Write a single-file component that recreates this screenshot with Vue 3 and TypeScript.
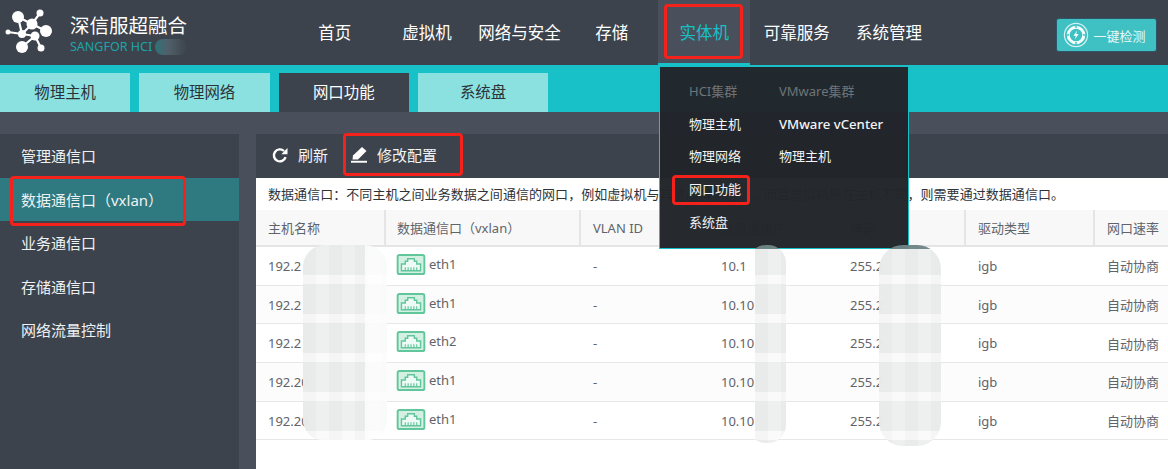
<template>
  <div class="page">
    <header class="topbar">
      <div class="brand">
        <svg class="logo" viewBox="0 0 54 54" width="54" height="54">
          <g stroke="#fff" stroke-width="2.2" fill="none">
            <path d="M18 12 22 29M8 27 22 29 35 31M32 19 40 8M32 19 46 26M18 12 32 19M22 29 32 19M35 31 22 42M35 31 41 43" />
          </g>
          <g fill="#fff">
            <circle cx="18" cy="12" r="6" />
            <circle cx="40" cy="8" r="3.5" />
            <circle cx="32" cy="19" r="5.5" />
            <circle cx="46" cy="26" r="6" />
            <circle cx="8" cy="27" r="2.5" />
            <circle cx="22" cy="29" r="4" />
            <circle cx="35" cy="31" r="4.5" />
            <circle cx="22" cy="42" r="6" />
            <circle cx="41" cy="43" r="3.5" />
          </g>
        </svg>
        <div class="brand-text">
          <div class="brand-name">深信服超融合</div>
          <div class="brand-sub">SANGFOR HCI<span class="brand-smudge"></span></div>
        </div>
      </div>
      <nav class="nav">
        <a v-for="item in navItems" :key="item" class="nav-item" :class="{ active: item === '实体机' }">{{ item }}</a>
      </nav>
      <button class="check-btn">
        <svg viewBox="0 0 26 26" width="26" height="26">
          <circle cx="13" cy="13" r="11.6" fill="none" stroke="#d5f2f2" stroke-width="1.2" />
          <circle cx="13" cy="13" r="7.8" fill="none" stroke="#f4fcfc" stroke-width="3" />
          <path d="M13 3.5V6M13 20V22.5M3.5 13H6M20 13H22.5" stroke="#3fc0c3" stroke-width="1.4" />
          <path d="M14.2 8.6 10.4 13.8h2.4l-1 3.6 3.8-5.4h-2.4z" fill="#fff" />
        </svg>
        <span>一键检测</span>
      </button>
    </header>

    <div class="tabbar">
      <div v-for="tab in tabs" :key="tab" class="tab" :class="{ active: tab === '网口功能' }">{{ tab }}</div>
    </div>

    <div class="body">
      <aside class="side">
        <div v-for="item in sideItems" :key="item" class="side-item" :class="{ active: item.startsWith('数据') }">{{ item }}</div>
      </aside>
      <main class="main">
        <div class="toolbar">
          <span class="tool">
            <svg viewBox="0 0 18 18" width="18" height="18">
              <path d="M14.6 11.2A6 6 0 1 1 13 5" fill="none" stroke="#fff" stroke-width="2.4" />
              <path d="M16.5 2v6.2h-6.2z" fill="#fff" />
            </svg>
            刷新
          </span>
          <span class="tool tool-edit">
            <svg viewBox="0 0 18 18" width="18" height="18">
              <path d="M12 1 16.5 5 8 13.5H2.5L3 9.5z" fill="#fff" />
              <rect x="1" y="14.8" width="16" height="1.9" fill="#fff" />
            </svg>
            修改配置
          </span>
        </div>
        <div class="content">
          <p class="desc">数据通信口：不同主机之间业务数据之间通信的网口，例如虚拟机与其他虚拟机通信，而且虚拟机所在主机不同，则需要通过数据通信口。</p>
          <div class="row head">
            <div v-for="col in columns" :key="col" class="cell">{{ col }}</div>
          </div>
          <div v-for="(r, i) in rows" :key="i" class="row" :class="{ odd: i % 2 === 1 }">
            <div class="cell">{{ r.host }}</div>
            <div class="cell port">
              <svg viewBox="0 0 30 22" width="30" height="21">
                <rect x="1" y="1" width="28" height="20" rx="2" fill="#d3f0e3" stroke="#62c69c" stroke-width="2" />
                <path d="M5 17.5V10.5H9V7.5H11.5V5H18.5V7.5H21V10.5H25V17.5Z" fill="#eefaf5" stroke="#62c69c" stroke-width="1.5" />
                <path d="M9 17V14M12 17V14M15 17V14M18 17V14M21 17V14" stroke="#62c69c" stroke-width="1.2" />
              </svg>
              <span>{{ r.port }}</span>
            </div>
            <div class="cell">-</div>
            <div class="cell">{{ r.ip }}</div>
            <div class="cell">{{ r.mask }}</div>
            <div class="cell">igb</div>
            <div class="cell">自动协商</div>
          </div>
        </div>
      </main>
    </div>

    <div class="menu">
      <div class="menu-col first">
        <div class="menu-title">HCI集群</div>
        <div class="menu-link">物理主机</div>
        <div class="menu-link">物理网络</div>
        <div class="menu-link">网口功能</div>
        <div class="menu-link">系统盘</div>
      </div>
      <div class="menu-col">
        <div class="menu-title">VMware集群</div>
        <div class="menu-link latin">VMware vCenter</div>
        <div class="menu-link">物理主机</div>
      </div>
    </div>

    <!-- 打码区域 -->
    <div v-for="(p, i) in smudges" :key="'s' + i" class="smudge" :class="p.cls"></div>

    <!-- 红框标注 -->
    <div class="mark mark-nav"></div>
    <div class="mark mark-edit"></div>
    <div class="mark mark-side"></div>
    <div class="mark mark-menu"></div>
  </div>
</template>

<script setup lang="ts">
const navItems = ['首页', '虚拟机', '网络与安全', '存储', '实体机', '可靠服务', '系统管理']
const tabs = ['物理主机', '物理网络', '网口功能', '系统盘']
const sideItems = ['管理通信口', '数据通信口（vxlan）', '业务通信口', '存储通信口', '网络流量控制']
const columns = ['主机名称', '数据通信口（vxlan）', 'VLAN ID', '数据通信IP', '掩码', '驱动类型', '网口速率']
const rows = [
  { host: '192.2', port: 'eth1', ip: '10.1', mask: '255.2' },
  { host: '192.2', port: 'eth1', ip: '10.10', mask: '255.2' },
  { host: '192.2', port: 'eth2', ip: '10.10.', mask: '255.2' },
  { host: '192.20', port: 'eth1', ip: '10.10.', mask: '255.2' },
  { host: '192.20', port: 'eth1', ip: '10.10', mask: '255.2' },
]
const smudges = [{ cls: 'sm-host' }, { cls: 'sm-ip' }, { cls: 'sm-mask' }]
</script>

<style>
html, body {
  margin: 0;
  background: #4a505b;
}
</style>

<style scoped>
.page {
  position: relative;
  width: 1168px;
  height: 469px;
  overflow: hidden;
  background: #4a505b;
  font-family: "Noto Sans", "Noto Sans CJK SC", sans-serif;
}

.topbar {
  display: flex;
  height: 65px;
  background: #3d434c;
  color: #fff;
}

.brand {
  display: flex;
  width: 288.5px;
  flex: none;
  align-items: flex-start;
}

.logo {
  margin: 5px 16px 0 0;
}

.brand-text {
  margin-top: 13px;
}

.brand-name {
  font-size: 19.5px;
  line-height: 26px;
}

.brand-sub {
  display: flex;
  align-items: center;
  font-size: 12.5px;
  line-height: 16px;
  color: #1fa3a8;
}

.brand-smudge {
  width: 32px;
  height: 16px;
  margin-left: 3px;
  border-radius: 8px;
  background: linear-gradient(90deg, #2f7177, #50606a 40%, #3d434c);
}

.nav {
  display: flex;
  width: 647px;
  flex: none;
}

.nav-item {
  width: 92.4px;
  height: 65px;
  box-sizing: border-box;
  flex: none;
  text-align: center;
  font-size: 16.5px;
  line-height: 65px;
  white-space: nowrap;
}

.nav-item.active {
  color: #17c1c7;
  background: #4a505b;
  border-bottom: 2px solid #17c1c7;
}

.check-btn {
  display: flex;
  align-items: center;
  flex: none;
  width: 101px;
  height: 34px;
  margin: 18px 0 0 120px;
  padding: 0 0 0 6px;
  box-sizing: border-box;
  gap: 5px;
  border: 1px solid #2f5568;
  border-radius: 3px;
  background: #3fc0c3;
  color: #e8f8f8;
  font-family: inherit;
  font-size: 13px;
}

.tabbar {
  display: flex;
  height: 39px;
  padding-top: 8px;
  gap: 9px;
  background: #17c1c7;
}

.tab {
  width: 130.3px;
  background: #8ae1e0;
  color: #2c3338;
  font-size: 15.4px;
  line-height: 39px;
  text-align: center;
}

.tab.active {
  background: #3d434c;
  color: #fff;
}

.body {
  display: flex;
  padding-top: 22px;
  gap: 17px;
}

.side {
  width: 239px;
  height: 335px;
  background: #3d434c;
  flex: none;
}

.side-item {
  height: 43.6px;
  padding-left: 21px;
  color: #eef1f3;
  font-size: 15px;
  line-height: 44px;
}

.side-item.active {
  background: #2f7a80;
}

.main {
  flex: 1;
  height: 335px;
}

.toolbar {
  display: flex;
  align-items: center;
  height: 44px;
  padding: 0 0 3px 15px;
  box-sizing: border-box;
  background: #3d434c;
  color: #f2f4f5;
  font-size: 15px;
}

.tool {
  display: flex;
  align-items: center;
  gap: 9px;
}

.tool-edit {
  margin-left: 22px;
}

.content {
  height: 291px;
  background: #fff;
  color: #5f646b;
  font-size: 13px;
}

.desc {
  height: 32px;
  margin: 0;
  padding-left: 12px;
  color: #2f3338;
  letter-spacing: 0.05px;
  line-height: 32px;
  white-space: nowrap;
}

.row {
  display: grid;
  grid-template-columns: 130px 195px 128px 129px 128px 129px 73px;
  height: 38.7px;
  box-sizing: border-box;
  border-bottom: 1px solid #e6e7e9;
}

.row.odd {
  background: #fcfcfc;
}

.row.head {
  height: 37px;
  background: #f8f8f8;
  border-bottom: 2px solid #e5e5e5;
}

.cell {
  display: flex;
  align-items: center;
  padding-left: 12px;
  box-sizing: border-box;
  white-space: nowrap;
  overflow: hidden;
}

.head .cell {
  border-right: 2px solid #e5e5e5;
}

.head .cell:last-child {
  border-right: 0;
}

.row .cell:nth-child(2) {
  padding-left: 11px;
}

.cell.port {
  padding-left: 10px !important;
  gap: 3px;
  align-items: flex-start;
  padding-top: 7px;
}

.cell.port span {
  line-height: 20px;
}

.menu {
  position: absolute;
  left: 659px;
  top: 66px;
  display: flex;
  width: 250px;
  height: 183px;
  box-sizing: border-box;
  padding: 8px 0 0 29px;
  background: rgba(34, 38, 43, 0.98);
  border: 1px solid #17c1c7;
  font-size: 13px;
}

.menu-col.first {
  width: 90px;
}

.menu-title,
.menu-link {
  height: 32.7px;
  line-height: 33px;
  color: #f2f4f5;
  white-space: nowrap;
}

.menu-title {
  color: #6f7478;
}

.menu-link.latin {
  font-size: 13.2px;
  font-weight: 500;
}

.smudge {
  position: absolute;
  top: 245px;
  opacity: 0.97;
  --bands: repeating-linear-gradient(180deg, #eef0f0 0 30px, #fafafa 30px 39px);
  --blocks: repeating-linear-gradient(90deg, rgba(0, 0, 0, 0.018) 0 13px, transparent 13px 26px);
  --cap: linear-gradient(#708686 0 4px, transparent 4px);
}

.sm-host {
  left: 303px;
  width: 84px;
  height: 195px;
  border-radius: 22px 22px 20px 20px;
  background: linear-gradient(90deg, transparent 62px, rgba(255, 255, 255, 0.75) 62px), var(--blocks), var(--bands);
}

.sm-ip {
  left: 748px;
  width: 38px;
  height: 198px;
  border-radius: 18px;
  background:
    var(--cap),
    var(--blocks) 7px 0 / 31px 100% no-repeat,
    var(--bands) 7px 0 / 31px 100% no-repeat;
}

.sm-mask {
  left: 879px;
  width: 62px;
  height: 201px;
  border-radius: 24px;
  background: var(--cap), var(--blocks), var(--bands);
}

.mark {
  position: absolute;
  box-sizing: border-box;
  border: 3px solid #f5211b;
  border-radius: 4px;
}

.mark-nav {
  left: 664px;
  top: 4px;
  width: 79px;
  height: 55px;
}

.mark-edit {
  left: 343px;
  top: 133px;
  width: 120px;
  height: 43px;
}

.mark-side {
  left: 10px;
  top: 176px;
  width: 176px;
  height: 50px;
}

.mark-menu {
  left: 672px;
  top: 175px;
  width: 78px;
  height: 30px;
}
</style>
